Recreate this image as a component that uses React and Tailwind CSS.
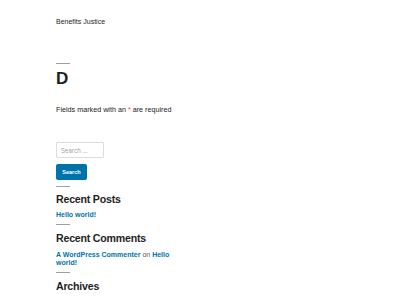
import React from "react";

const Sep = () => <div className="w-[14px] h-px bg-[#a0a0a0]" />;

const App = () => {
  return (
    <div className="w-[400px] h-[300px] overflow-hidden bg-white font-['Liberation_Sans',Arial,sans-serif] text-[#1e1e1e]">
      <div className="px-[56px]">
        {/* header */}
        <div className="pt-[18px] h-[63px]">
          <p className="text-[7px] leading-[8px]">Benefits Justice</p>
        </div>

        {/* page title */}
        <Sep />
        <h1 className="mt-[8px] text-[17px] leading-[14px] font-bold">D</h1>
        <p className="mt-[20px] text-[7.2px] leading-[8px] text-[#222]">
          Fields marked with an <span className="text-[#e65054]">*</span> are required
        </p>

        {/* search */}
        <div className="mt-[28px] w-[48px] h-[16px] border border-[#dcdcdc] rounded-[1px] flex items-center px-[4px]">
          <span className="text-[6px] text-[#a0a0a0] font-['Inter',sans-serif]">Search …</span>
        </div>
        <button className="mt-[6px] w-[31px] h-[16px] bg-[#0073aa] rounded-[2px] text-white text-[5.5px] font-bold flex items-center justify-center">
          Search
        </button>

        <div className="mt-[6px]">
          <Sep />
        </div>
        <h2 className="mt-[7px] text-[10.6px] leading-[11px] font-bold tracking-[-0.2px]">Recent Posts</h2>
        <p className="mt-[6px] text-[7px] leading-[8px] font-bold text-[#0073aa]">Hello world!</p>

        <div className="mt-[5px]">
          <Sep />
        </div>
        <h2 className="mt-[8px] text-[10.6px] leading-[11px] font-bold tracking-[-0.2px]">Recent Comments</h2>
        <div className="mt-[7px] w-[120px] text-[7px] leading-[8px] font-bold text-[#0073aa]">
          <span>A WordPress Commenter</span> <span className="font-normal text-[#555]">on</span>{" "}
          <span>Hello world!</span>
        </div>

        <div className="mt-[5px]">
          <Sep />
        </div>
        <h2 className="mt-[8px] text-[10.6px] leading-[11px] font-bold tracking-[-0.2px]">Archives</h2>
      </div>
    </div>
  );
};

export default App;
